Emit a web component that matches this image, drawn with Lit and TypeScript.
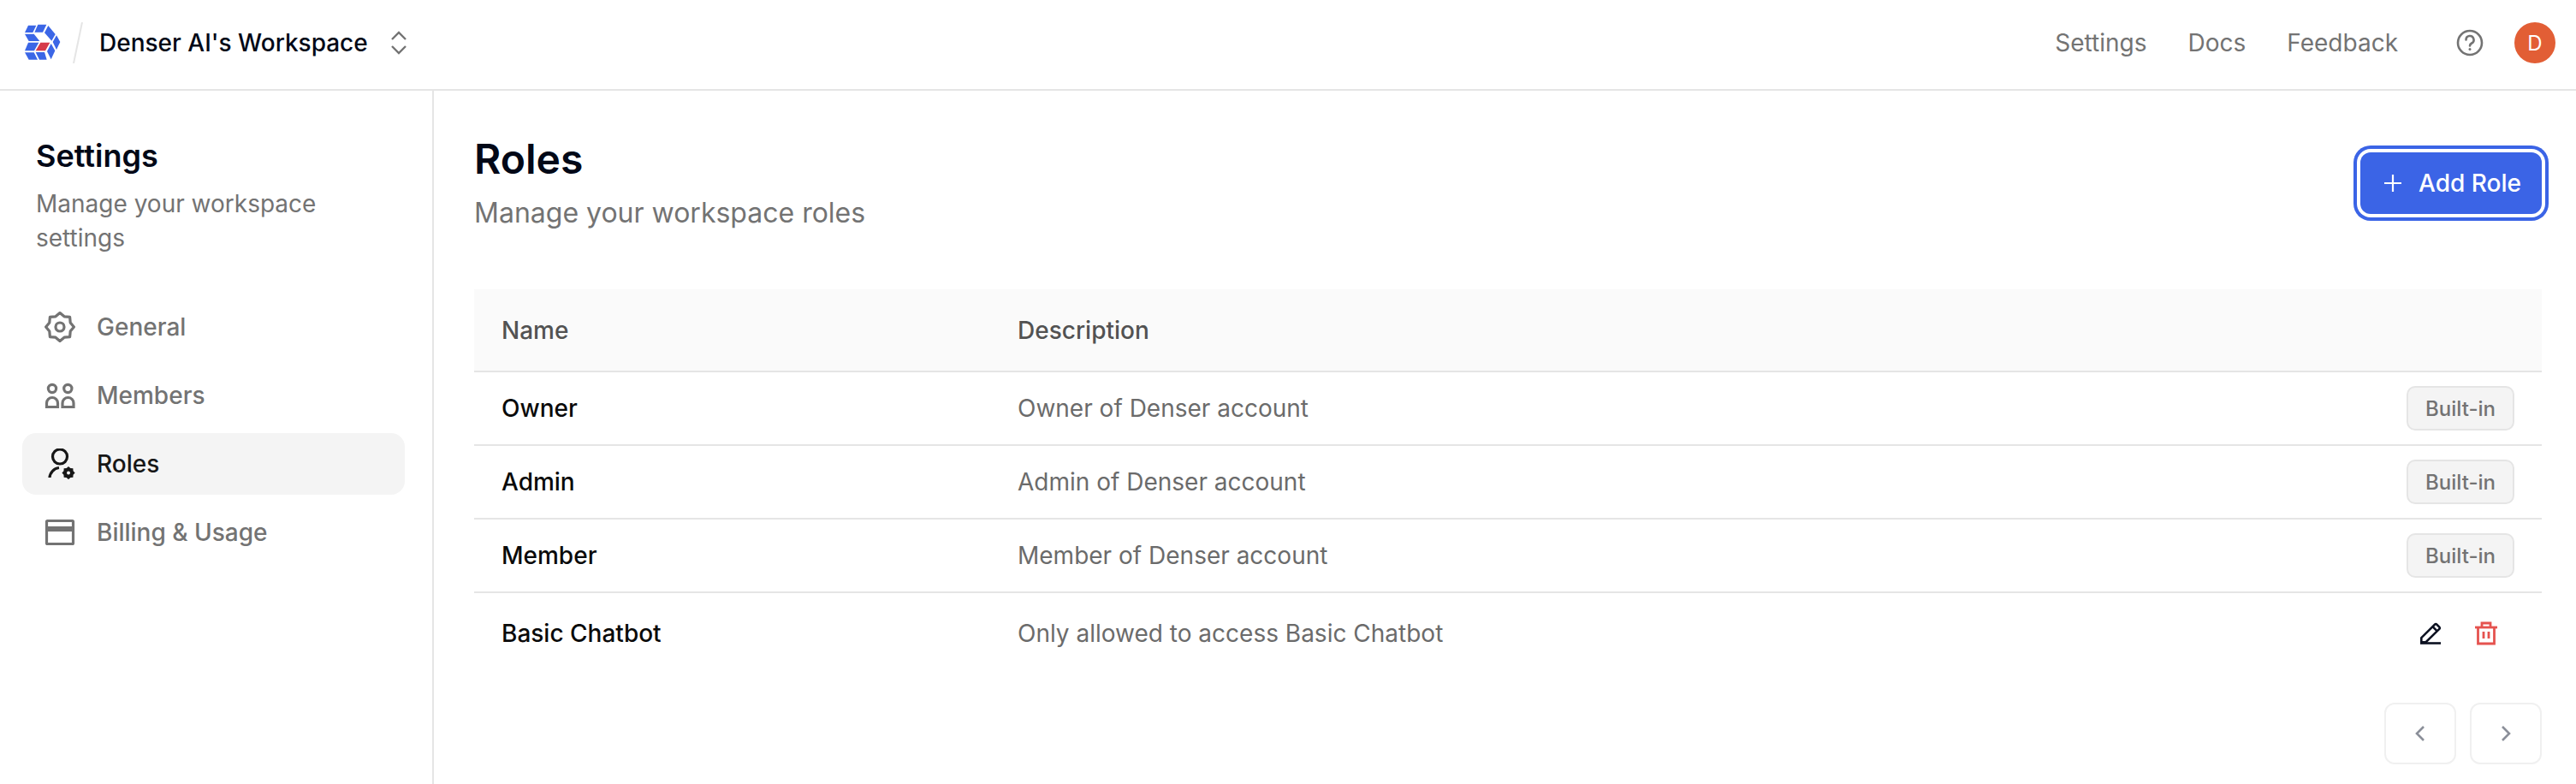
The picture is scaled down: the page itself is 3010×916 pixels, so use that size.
import { LitElement, html, css, svg } from "lit";
import { customElement } from "lit/decorators.js";

const starPts = (cx: number, cy: number, R: number, r: number) => {
  const pts: string[] = [];
  for (let i = 0; i < 16; i++) {
    const q = i % 2 === 0 ? R : r;
    const a = (i * Math.PI) / 8 - Math.PI / 2;
    pts.push(`${(cx + q * Math.cos(a)).toFixed(2)},${(cy + q * Math.sin(a)).toFixed(2)}`);
  }
  return pts.join(" ");
};

const gear = svg`<svg class="ic" width="36" height="36" viewBox="0 0 36 36" fill="none" stroke="currentColor" stroke-width="3.2" stroke-linejoin="round"><polygon points=${starPts(18, 18, 16.4, 13.2)}></polygon><circle cx="18" cy="18" r="5"></circle></svg>`;
const members = svg`<svg class="ic" width="36" height="36" viewBox="0 0 36 36" fill="none" stroke="currentColor" stroke-width="3.2"><circle cx="9" cy="10" r="4.6"></circle><circle cx="27.3" cy="10" r="4.6"></circle><path d="M2.5 31.5V27a6.5 6.5 0 0 1 13 0v4.5z"></path><path d="M21 31.5V27a6.5 6.5 0 0 1 13 0v4.5z"></path></svg>`;
const rolesIc = svg`<svg class="ic" width="36" height="36" viewBox="0 0 36 36" fill="none" stroke="currentColor" stroke-width="3.2"><circle cx="18" cy="9.5" r="8.5"></circle><path d="M6 34a12.5 12.5 0 0 1 11-11.5"></path><polygon points=${starPts(28, 28.5, 7.6, 6)} fill="currentColor" stroke="none"></polygon><circle cx="28" cy="28.5" r="2" fill="#f4f4f4" stroke="none"></circle></svg>`;
const card = svg`<svg class="ic" width="36" height="36" viewBox="0 0 36 36" fill="none" stroke="currentColor" stroke-width="3.2"><rect x="2.5" y="4.5" width="31" height="27" rx="1"></rect><path d="M2 14h32" stroke-width="6"></path></svg>`;

const LOGO_BLUE: string[] = [
  "40,45 68,45 56,70 28,70",
  "74,42 104,42 91,69 62,69",
  "110,46 135,76 122,99 97,71",
  "139,80 152,103 139,130 126,103",
  "120,109 134,134 120,164 106,136",
  "28,75 60,75 80,100 42,100",
  "40,105 77,105 61,134 28,134",
  "28,140 60,140 73,165 42,165",
  "66,139 97,139 105,165 79,165",
];

const logo = svg`<svg width="44" height="44" viewBox="25 40 132 132" fill="#3B66E6">${LOGO_BLUE.map((p) => svg`<polygon points=${p}></polygon>`)}<polygon points="83,105 116,105 100,134 66,134" fill="#D63B4A"></polygon></svg>`;

const rows = [
  ["Owner", "Owner of Denser account"],
  ["Admin", "Admin of Denser account"],
  ["Member", "Member of Denser account"],
];

@customElement("app-root")
export class AppRoot extends LitElement {
  static styles = css`
    :host { display: flex; flex-direction: column; height: 916px; overflow: hidden; background: #fff; font-family: Inter, "Liberation Sans", sans-serif; font-size: 28px; color: #020817; }
    * { box-sizing: border-box; }
    header { flex: none; height: 106px; padding: 0 24px 4px 28px; border-bottom: 2px solid #e5e5e5; display: flex; align-items: center; }
    .logo { display: flex; flex: none; }
    .slash { flex: none; width: 12px; height: 48px; margin: 0 19px 0 13px; }
    .ws { font-weight: 500; letter-spacing: 0; }
    .updown { margin-left: 26px; display: flex; color: #737373; }
    .spacer { flex: 1; }
    .links { display: flex; gap: 48px; color: #737373; }
    .help { display: flex; margin-left: 68px; color: #737373; }
    .avatar { margin-left: 36px; width: 48px; height: 48px; border-radius: 50%; background: #e25e35; color: #fff; font-size: 24px; display: flex; align-items: center; justify-content: center; }
    .body { flex: 1; display: flex; min-height: 0; }
    aside { flex: none; width: 507px; border-right: 2px solid #e5e5e5; padding: 52px 32px 0 26px; }
    aside h2 { margin: 0 0 0 16px; font-size: 36px; line-height: 48px; font-weight: 600; }
    aside p { margin: 12px 0 0 16px; color: #737373; line-height: 40px; width: 400px; }
    nav { margin-top: 48px; display: flex; flex-direction: column; gap: 8px; }
    .item { height: 72px; border-radius: 16px; padding-left: 26px; display: flex; align-items: center; gap: 25px; color: #737373; font-weight: 500; }
    .item.on { background: #f4f4f4; color: #171717; }
    .ic { flex: none; display: block; }
    main { flex: 1; min-width: 0; padding: 52px 40px 0 47px; }
    .head { display: flex; justify-content: space-between; align-items: flex-start; }
    h1 { margin: 0; font-size: 48px; line-height: 56px; font-weight: 600; }
    .sub { margin-top: 15px; font-size: 32px; line-height: 40px; color: #737373; }
    .add { margin-top: 20px; height: 72px; padding: 0 24px 0 28px; border-radius: 12px; border: 0; background: #3b64e6; color: #fff; font: 500 28px Inter, sans-serif; display: flex; align-items: center; gap: 20px; box-shadow: 0 0 0 4px #fff, 0 0 0 8px #3b64e6; }
    table { margin-top: 69px; width: 100%; border-collapse: collapse; table-layout: fixed; }
    th { height: 96px; background: #fafafa; border-bottom: 2px solid #e5e5e5; text-align: left; padding: 0 32px; font-weight: 500; color: #525252; }
    th:first-child { width: 603px; }
    th:last-child { width: 300px; }
    td { height: 86px; border-bottom: 2px solid #e5e5e5; padding: 0 32px; color: #6b6b6b; }
    td:first-child { color: #0a0a0a; font-weight: 500; }
    td:last-child { padding: 0 32px 0 0; }
    tr.last td { border-bottom: 0; height: 94px; }
    .cell { display: flex; justify-content: flex-end; align-items: center; }
    .badge { width: 126px; height: 52px; border-radius: 10px; border: 2px solid #e5e5e5; background: #f4f4f4; color: #737373; font-size: 24px; font-weight: 500; display: flex; align-items: center; justify-content: center; }
    .acts { gap: 38px; padding-right: 19px; }
    .pager { margin-top: 35px; display: flex; justify-content: flex-end; gap: 16px; }
    .pg { width: 84px; height: 72px; border: 2px solid #f0f0f0; border-radius: 12px; display: flex; align-items: center; justify-content: center; color: #8b8f99; }
  `;

  render() {
    return html`
      <header>
        <span class="logo">${logo}</span>
        <svg class="slash" viewBox="0 0 12 48" fill="none" stroke="#e5e5e5" stroke-width="2"><path d="M11 0L1 48"></path></svg>
        <span class="ws">Denser AI's Workspace</span>
        <span class="updown"><svg width="20" height="28" viewBox="0 0 20 28" fill="none" stroke="currentColor" stroke-width="2.4"><path d="M2 10l8-8 8 8"></path><path d="M2 18l8 8 8-8"></path></svg></span>
        <span class="spacer"></span>
        <div class="links"><span>Settings</span><span>Docs</span><span>Feedback</span></div>
        <span class="help"><svg width="32" height="32" viewBox="0 0 32 32" fill="none" stroke="currentColor" stroke-width="2.6"><circle cx="16" cy="16" r="14"></circle><path d="M11.5 12.5a4.5 4.5 0 1 1 6.6 4c-1.4.8-2.1 1.6-2.1 3" stroke-linecap="round"></path><circle cx="16" cy="23.4" r="1.5" fill="currentColor" stroke="none"></circle></svg></span>
        <span class="avatar">D</span>
      </header>
      <div class="body">
        <aside>
          <h2>Settings</h2>
          <p>Manage your workspace settings</p>
          <nav>
            <div class="item">${gear}<span>General</span></div>
            <div class="item">${members}<span>Members</span></div>
            <div class="item on">${rolesIc}<span>Roles</span></div>
            <div class="item">${card}<span>Billing &amp; Usage</span></div>
          </nav>
        </aside>
        <main>
          <div class="head">
            <div><h1>Roles</h1><div class="sub">Manage your workspace roles</div></div>
            <button class="add"><svg width="20" height="20" viewBox="0 0 20 20" stroke="#fff" stroke-width="2.2" fill="none"><path d="M10 0v20M0 10h20"></path></svg>Add Role</button>
          </div>
          <table>
            <thead><tr><th>Name</th><th>Description</th><th></th></tr></thead>
            <tbody>
              ${rows.map((r) => html`<tr><td>${r[0]}</td><td>${r[1]}</td><td><div class="cell"><span class="badge">Built-in</span></div></td></tr>`)}
              <tr class="last"><td>Basic Chatbot</td><td>Only allowed to access Basic Chatbot</td><td><div class="cell acts">
                <svg width="26" height="26" viewBox="0 0 26 26" fill="none" stroke="#0b1020" stroke-width="2.6"><path d="M1 24.5h24"></path><path d="M2.3 23.2v-5L18 2.6a1.6 1.6 0 0 1 2.3 0l3 3a1.6 1.6 0 0 1 0 2.3L7.6 23.2z"></path><path d="M15.5 5.2l5.2 5.2"></path></svg>
                <svg width="28" height="28" viewBox="0 0 28 28" fill="none" stroke="#e5534f" stroke-width="2.8"><path d="M1 7h26"></path><path d="M9 7V2h10v5"></path><path d="M4.5 7v19h19V7"></path><path d="M11 12v8M17 12v8"></path></svg>
              </div></td></tr>
            </tbody>
          </table>
          <div class="pager">
            <div class="pg"><svg width="12" height="18" viewBox="0 0 12 18" fill="none" stroke="currentColor" stroke-width="2.6"><path d="M10 1L2 9l8 8"></path></svg></div>
            <div class="pg"><svg width="12" height="18" viewBox="0 0 12 18" fill="none" stroke="currentColor" stroke-width="2.6"><path d="M2 1l8 8-8 8"></path></svg></div>
          </div>
        </main>
      </div>
    `;
  }
}
